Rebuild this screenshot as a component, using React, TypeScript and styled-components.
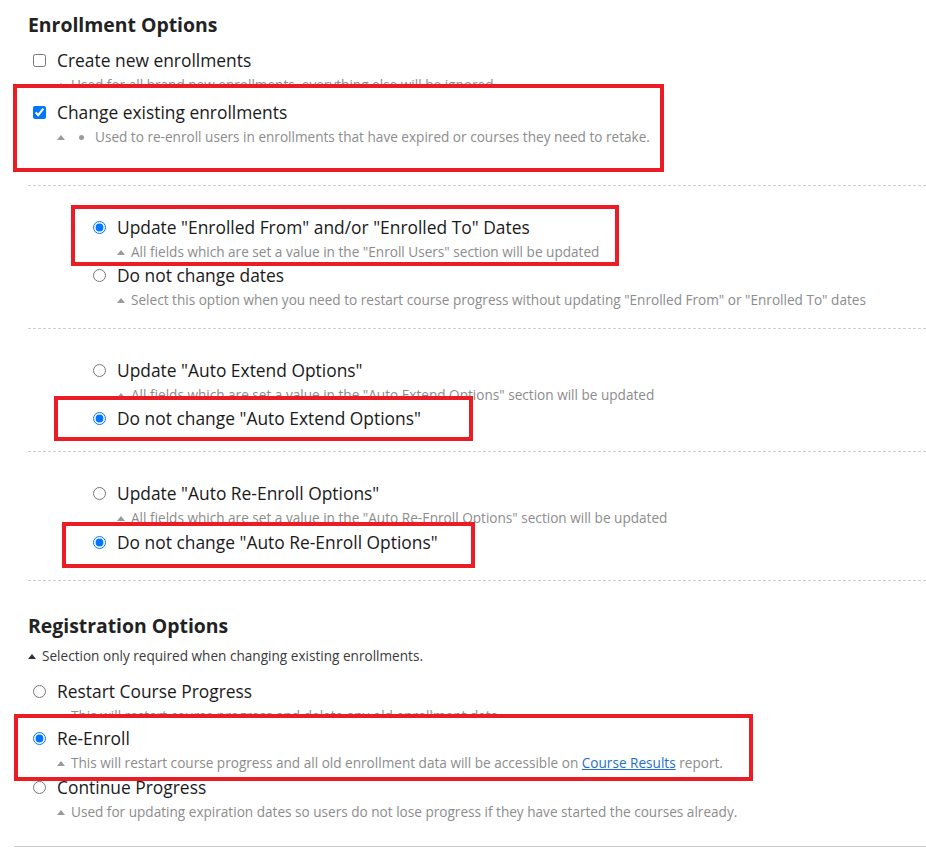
import styled, { createGlobalStyle } from 'styled-components';
import type { ReactNode } from 'react';

const GlobalStyle = createGlobalStyle`
  html, body {
    margin: 0;
    padding: 0;
    background: #ffffff;
  }
  body {
    font-family: 'Open Sans', 'Noto Sans', sans-serif;
    color: #212529;
  }
`;

type OptionProps = {
  type: 'checkbox' | 'radio';
  name: string;
  label: string;
  checked?: boolean;
  desc?: ReactNode;
  bullet?: boolean;
  $shift?: number;
};

const Option = ({ type, name, label, checked, desc, bullet, $shift }: OptionProps) => (
  <OptionStyle $shift={$shift}>
    <ControlRowStyle>
      <ControlStyle type={type} name={name} defaultChecked={checked} />
      <LabelStyle>{label}</LabelStyle>
    </ControlRowStyle>
    {desc && (
      <DescStyle>
        <CaretStyle />
        {bullet && <BulletStyle />}
        <span>{desc}</span>
      </DescStyle>
    )}
  </OptionStyle>
);

export default function App() {
  return (
    <>
      <GlobalStyle />
      <PageStyle>
        <HeadingStyle>Enrollment Options</HeadingStyle>
        <SectionStyle $top={9} $bottom={13}>
          <Option
            type="checkbox"
            name="create"
            label="Create new enrollments"
            desc="Used for all brand new enrollments, everything else will be ignored."
          />
          <HighlightStyle $top={-11} $left={-15} $width={651} $pad="12px 0 21px 11px">
            <Option
              type="checkbox"
              name="change"
              label="Change existing enrollments"
              checked
              bullet
              desc="Used to re-enroll users in enrollments that have expired or courses they need to retake."
            />
          </HighlightStyle>
        </SectionStyle>

        <SectionStyle $dashed $indent={60} $top={19} $bottom={18}>
          <HighlightStyle $top={0} $left={-17} $width={548} $pad="6px 0 0 13px">
            <Option
              type="radio"
              name="dates"
              label={'Update "Enrolled From" and/or "Enrolled To" Dates'}
              checked
              desc={'All fields which are set a value in the "Enroll Users" section will be updated'}
            />
          </HighlightStyle>
          <Option
            type="radio"
            name="dates"
            label="Do not change dates"
            $shift={-3}
            desc={
              'Select this option when you need to restart course progress without updating "Enrolled From" or "Enrolled To" dates'
            }
          />
        </SectionStyle>

        <SectionStyle $dashed $indent={60} $top={29} $bottom={10}>
          <Option
            type="radio"
            name="extend"
            label={'Update "Auto Extend Options"'}
            desc={'All fields which are set a value in the "Auto Extend Options" section will be updated'}
          />
          <HighlightStyle $top={-9} $left={-34} $width={419} $pad="6px 0 7px 30px">
            <Option type="radio" name="extend" label={'Do not change "Auto Extend Options"'} checked />
          </HighlightStyle>
        </SectionStyle>

        <SectionStyle $dashed $indent={60} $top={29} $bottom={12}>
          <Option
            type="radio"
            name="reenroll"
            label={'Update "Auto Re-Enroll Options"'}
            desc={'All fields which are set a value in the "Auto Re-Enroll Options" section will be updated'}
          />
          <HighlightStyle $top={-6} $left={-26} $width={413} $pad="4px 0 10px 22px">
            <Option type="radio" name="reenroll" label={'Do not change "Auto Re-Enroll Options"'} checked />
          </HighlightStyle>
        </SectionStyle>

        <SectionStyle $dashed $indent={0} $top={31} $bottom={24}>
          <HeadingStyle>Registration Options</HeadingStyle>
          <NoteStyle>
            <CaretStyle $dark />
            <span>Selection only required when changing existing enrollments.</span>
          </NoteStyle>
          <Option
            type="radio"
            name="registration"
            label="Restart Course Progress"
            $shift={13}
            desc="This will restart course progress and delete any old enrollment data."
          />
          <HighlightStyle $top={-12} $left={-14} $width={739} $pad="8px 0 4px 10px">
            <Option
              type="radio"
              name="registration"
              label="Re-Enroll"
              checked
              desc={
                <>
                  This will restart course progress and all old enrollment data will be accessible on{' '}
                  <LinkStyle href="#">Course Results</LinkStyle> report.
                </>
              }
            />
          </HighlightStyle>
          <Option
            type="radio"
            name="registration"
            label="Continue Progress"
            $shift={-6}
            desc="Used for updating expiration dates so users do not lose progress if they have started the courses already."
          />
        </SectionStyle>
        <RuleStyle />
      </PageStyle>
    </>
  );
}

const PageStyle = styled.div`
  padding: 11px 0 0 28px;
`;

const HeadingStyle = styled.h2`
  margin: 0;
  font-size: 19.4px;
  line-height: 28px;
  font-weight: 700;
  color: #222222;
`;

const SectionStyle = styled.section<{ $dashed?: boolean; $indent?: number; $top: number; $bottom: number }>`
  display: flex;
  flex-direction: column;
  padding: ${({ $top }) => $top}px 0 ${({ $bottom }) => $bottom}px ${({ $indent }) => $indent ?? 0}px;
  border-top: ${({ $dashed }) => ($dashed ? '1px dashed #cfcfcf' : 'none')};
`;

const OptionStyle = styled.div<{ $shift?: number }>`
  display: flex;
  flex-direction: column;
  margin-top: ${({ $shift }) => $shift ?? 0}px;
`;

const ControlRowStyle = styled.label`
  display: flex;
  align-items: center;
  height: 24px;
`;

const ControlStyle = styled.input`
  width: 13px;
  height: 13px;
  margin: 0 11px 0 5px;
  flex-shrink: 0;
`;

const LabelStyle = styled.span`
  font-size: 17.4px;
  line-height: 24px;
  color: #1a1a1a;
  white-space: nowrap;
`;

const DescStyle = styled.div`
  display: flex;
  align-items: center;
  margin-top: 3px;
  padding-left: 29px;
  font-size: 13.6px;
  line-height: 20px;
  color: #8c8c8c;
  white-space: nowrap;
`;

const NoteStyle = styled.div`
  display: flex;
  align-items: center;
  margin-top: 6px;
  font-size: 13.6px;
  line-height: 20px;
  color: #3a3a3a;
  white-space: nowrap;
`;

const CaretStyle = styled.span<{ $dark?: boolean }>`
  width: 0;
  height: 0;
  margin-right: 6px;
  border-left: 4px solid transparent;
  border-right: 4px solid transparent;
  border-bottom: 5px solid ${({ $dark }) => ($dark ? '#333333' : '#9a9a9a')};
`;

const BulletStyle = styled.span`
  width: 5px;
  height: 5px;
  margin: 0 11px 0 8px;
  border-radius: 50%;
  background: #9a9a9a;
`;

const HighlightStyle = styled.div<{ $top: number; $left: number; $width: number; $pad: string }>`
  position: relative;
  z-index: 1;
  box-sizing: border-box;
  width: ${({ $width }) => $width}px;
  margin-top: ${({ $top }) => $top}px;
  margin-left: ${({ $left }) => $left}px;
  padding: ${({ $pad }) => $pad};
  background: #ffffff;
  border: 4px solid #ec1c24;
`;

const LinkStyle = styled.a`
  color: #1e6fc8;
  text-decoration: underline;
`;

const RuleStyle = styled.div`
  height: 1px;
  margin-left: -14px;
  background: #cccccc;
`;
